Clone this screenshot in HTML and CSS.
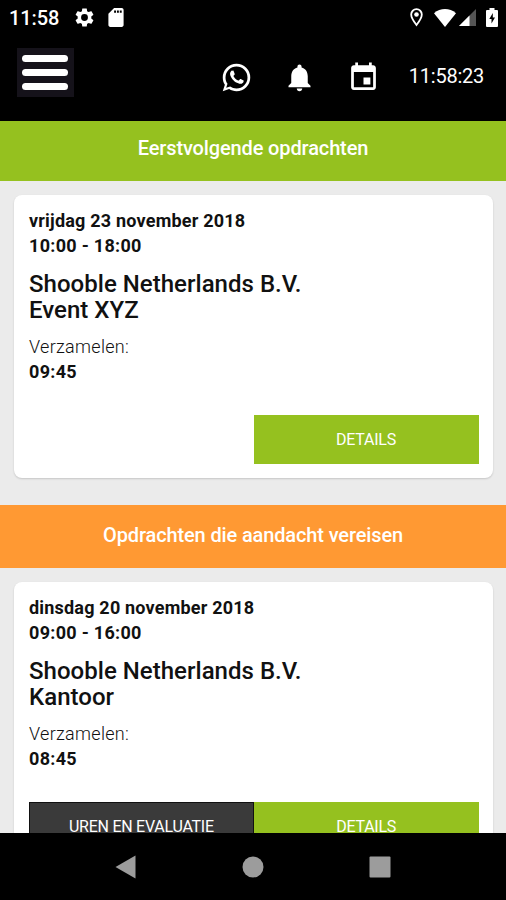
FILE: index.html
```html
<!DOCTYPE html>
<html lang="nl">
<head>
<meta charset="utf-8">
<title>Opdrachten</title>
<link rel="stylesheet" href="styles.css">
</head>
<body>
<div class="status">
  <span class="status-time">11:58</span>
  <svg class="gear" viewBox="2 2 20 20"><path d="M19.14 12.94c.04-.3.06-.61.06-.94 0-.32-.02-.64-.07-.94l2.03-1.58c.18-.14.23-.41.12-.61l-1.92-3.32c-.12-.22-.37-.29-.59-.22l-2.39.96c-.5-.38-1.03-.7-1.62-.94l-.36-2.54c-.04-.24-.24-.41-.48-.41h-3.84c-.24 0-.43.17-.47.41l-.36 2.54c-.59.24-1.13.57-1.62.94l-2.39-.96c-.22-.08-.47 0-.59.22L2.74 8.87c-.12.21-.08.47.12.61l2.03 1.58c-.05.3-.09.63-.09.94s.02.64.07.94l-2.03 1.58c-.18.14-.23.41-.12.61l1.92 3.32c.12.22.37.29.59.22l2.39-.96c.5.38 1.03.7 1.62.94l.36 2.54c.05.24.24.41.48.41h3.84c.24 0 .44-.17.47-.41l.36-2.54c.59-.24 1.13-.56 1.62-.94l2.39.96c.22.08.47 0 .59-.22l1.92-3.32c.12-.22.07-.47-.12-.61l-2.01-1.58zM12 15.6A3.6 3.6 0 1 1 12 8.4a3.6 3.6 0 0 1 0 7.2z"/></svg>
  <svg class="sd" viewBox="4 2 16 20"><path d="M18 2h-8L4 8v12c0 1.100.9 2 2 2h12c1.100 0 2-.9 2-2V4c0-1.100-.9-2-2-2zm-6 5h-2V4.500h2V7zm3 0h-2V4.500h2V7zm3 0h-2V4.500h2V7z"/></svg>
  <span class="spacer"></span>
  <svg class="pin" viewBox="0 0 13 19"><path d="M6.500 1.200A5.300 5.300 0 0 0 1.200 6.500C1.200 10.200 6.500 17 6.500 17s5.300-6.800 5.300-10.500A5.300 5.300 0 0 0 6.500 1.200z" fill="none" stroke="#fff" stroke-width="1.800"/><circle cx="6.500" cy="6.500" r="2.300"/></svg>
  <svg class="wifi" viewBox="0 0 22 18"><path d="M0 4.200C6.500-1.400 15.500-1.400 22 4.200L11 18z"/></svg>
  <svg class="signal" viewBox="0 0 17 17"><path d="M17 0v17H0z" fill="#555"/><path d="M10.500 6.500V17H0z"/></svg>
  <svg class="battery" viewBox="0 0 12 19"><path fill-rule="evenodd" d="M3.500 0h5v2H11a1 1 0 0 1 1 1v15a1 1 0 0 1-1 1H1a1 1 0 0 1-1-1V3a1 1 0 0 1 1-1h2.500zM6.800 5L3.300 11h2.200v4.500l3.500-6H6.800z"/></svg>
</div>
<header class="toolbar">
  <div class="menu"><i></i><i></i><i></i></div>
  <div class="icons">
    <svg viewBox="0 0 24 24"><path d="M16.750,13.960C17,14.090 17.160,14.160 17.210,14.260C17.270,14.370 17.250,14.870 17,15.440C16.800,16 15.760,16.540 15.300,16.560C14.840,16.580 14.830,16.920 12.340,15.830C9.850,14.740 8.350,12.080 8.230,11.910C8.110,11.740 7.270,10.530 7.310,9.300C7.360,8.080 8,7.500 8.260,7.260C8.500,7 8.770,6.970 8.940,7H9.410C9.560,7 9.770,6.940 9.960,7.450L10.650,9.320C10.710,9.450 10.750,9.600 10.660,9.760L10.390,10.170L10,10.590C9.880,10.710 9.740,10.840 9.880,11.090C10,11.350 10.500,12.180 11.200,12.870C12.110,13.750 12.910,14.040 13.150,14.170C13.390,14.310 13.540,14.290 13.690,14.130L14.500,13.190C14.690,12.940 14.850,13 15.080,13.080L16.750,13.960M12,2A10,10 0 0,1 22,12A10,10 0 0,1 12,22C10.030,22 8.200,21.430 6.650,20.450L2,22L3.550,17.350C2.570,15.800 2,13.970 2,12A10,10 0 0,1 12,2M12,4A8,8 0 0,0 4,12C4,13.720 4.540,15.310 5.460,16.610L4.500,19.500L7.390,18.540C8.690,19.460 10.280,20 12,20A8,8 0 0,0 20,12A8,8 0 0,0 12,4Z"/></svg>
    <svg viewBox="0 0 24 24"><path d="M12 22c1.100 0 2-.9 2-2h-4c0 1.100.89 2 2 2zm6-6v-5c0-3.070-1.640-5.640-4.500-6.320V4c0-.83-.67-1.500-1.500-1.500s-1.500.67-1.500 1.500v.68C7.630 5.360 6 7.920 6 11v5l-2 2v1h16v-1l-2-2z"/></svg>
    <svg viewBox="0 0 24 24"><path d="M17 12h-5v5h5v-5zM16 1v2H8V1H6v2H5c-1.110 0-1.990.9-1.990 2L3 19c0 1.100.89 2 2 2h14c1.100 0 2-.9 2-2V5c0-1.100-.9-2-2-2h-1V1h-2zm3 18H5V8h14v11z"/></svg>
  </div>
  <span class="clock">11:58:23</span>
</header>
<main class="content">
  <h2 class="band band-green"><span>Eerstvolgende opdrachten</span></h2>
  <section class="card">
    <p class="when"><span class="date">vrijdag 23 november 2018</span><br><span>10:00 - 18:00</span></p>
    <h3 class="title">Shooble Netherlands B.V.<br>Event XYZ</h3>
    <p class="gather"><span class="label">Verzamelen:</span><br><b>09:45</b></p>
    <div class="actions"><a class="btn btn-green">DETAILS</a></div>
  </section>
  <h2 class="band band-orange"><span>Opdrachten die aandacht vereisen</span></h2>
  <section class="card">
    <p class="when"><span class="date">dinsdag 20 november 2018</span><br><span>09:00 - 16:00</span></p>
    <h3 class="title">Shooble Netherlands B.V.<br>Kantoor</h3>
    <p class="gather"><span class="label">Verzamelen:</span><br><b>08:45</b></p>
    <div class="actions"><a class="btn btn-dark">UREN EN EVALUATIE</a><a class="btn btn-green">DETAILS</a></div>
  </section>
</main>
<nav class="navbar">
  <svg viewBox="0 0 22 24"><path d="M.5 12L20.500.5v23z"/></svg>
  <svg viewBox="0 0 22 24"><circle cx="11" cy="12" r="10.500"/></svg>
  <svg viewBox="0 0 22 24"><rect x=".5" y="1.500" width="21" height="21" rx="1"/></svg>
</nav>
</body>
</html>
```

FILE: styles.css
```css
* { box-sizing: border-box; }
body {
  margin: 0;
  width: 506px;
  height: 900px;
  display: flex;
  flex-direction: column;
  overflow: hidden;
  background: #000;
  color: #111;
  font-family: Roboto, "Liberation Sans", sans-serif;
}
svg { display: block; flex: none; fill: #fff; }
h2, h3, p { margin: 0; }

.status {
  flex: none;
  height: 35px;
  padding: 0 8px 0 9px;
  display: flex;
  align-items: center;
  color: #fff;
}
.status-time { width: 66px; font-size: 20px; font-weight: 500; letter-spacing: -.1px; }
.gear { width: 19px; height: 19px; }
.sd { width: 16px; height: 19px; margin-left: 14px; }
.spacer { flex: 1; }
.pin { width: 13px; height: 19px; }
.wifi { width: 22px; height: 18px; margin-left: 11.5px; }
.signal { width: 17px; height: 17px; margin-left: 3px; }
.battery { width: 12px; height: 19px; margin-left: 10px; }

.toolbar {
  flex: none;
  height: 86px;
  padding: 13px 22px 0 17px;
  display: flex;
  color: #fff;
}
.menu {
  width: 57px;
  height: 49px;
  padding: 7px 6px 0 5px;
  display: flex;
  flex-direction: column;
  gap: 7px;
  background: #15121a;
}
.menu i { height: 7px; border-radius: 4px; background: #fff; }
.icons { margin: 13px 0 0 145.5px; display: flex; gap: 30.5px; }
.icons svg { width: 33px; height: 33px; }
.clock { margin: 16px 0 0 auto; font-size: 20px; line-height: 24px; letter-spacing: -.25px; }

.content { flex: 1; min-height: 0; overflow: hidden; background: #ebebeb; }
.band {
  display: flex;
  justify-content: center;
  color: #fff;
  font-size: 20px;
  font-weight: 500;
  line-height: 24px;
  letter-spacing: -.13px;
}
.band-green { height: 60.4px; padding-top: 15px; background: #95c11f; }
.band-orange { height: 63px; padding-top: 18px; margin-top: 26.6px; background: #ff9933; }
.card {
  height: 283px;
  margin: 14px 13.5px 0 14px;
  padding: 13px 14px 14px 15px;
  display: flex;
  flex-direction: column;
  border-radius: 8px;
  background: #fff;
  box-shadow: 0 1px 2px rgba(0, 0, 0, .16);
}
.when { font-size: 18px; font-weight: 700; line-height: 25px; letter-spacing: .3px; }
.date { letter-spacing: .2px; }
.title { margin-top: 13px; font-size: 24px; font-weight: 500; line-height: 26px; letter-spacing: .03px; }
.gather { margin-top: 11px; font-size: 18px; line-height: 25px; letter-spacing: .3px; }
.label { font-weight: 300; }
.actions { margin-top: auto; display: flex; justify-content: flex-end; }
.btn {
  width: 225px;
  height: 49px;
  color: #fff;
  font-size: 16px;
  line-height: 49px;
  letter-spacing: -.25px;
  text-align: center;
}
.btn-green { background: #95c11f; }
.btn-dark { background: #3a3a3a; border: 1px solid #111; line-height: 47px; }

.navbar {
  flex: none;
  height: 67px;
  padding: 0 115px;
  display: flex;
  justify-content: space-between;
  align-items: center;
}
.navbar svg { width: 22px; height: 24px; fill: #9c9c9c; }
```
